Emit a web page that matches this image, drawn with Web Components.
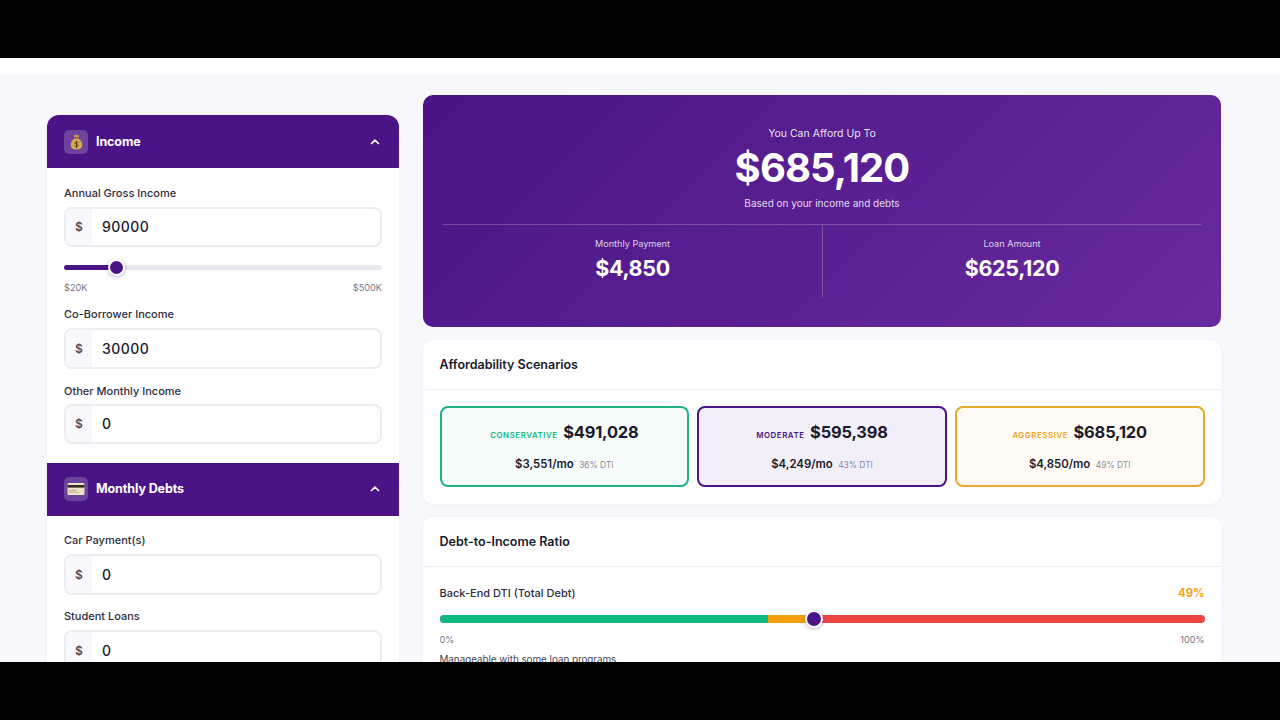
<!DOCTYPE html>
<html lang="en">
<head>
<meta charset="utf-8">
<title>Affordability Calculator</title>
<style>
html, body { margin: 0; height: 100%; background: #000; overflow: hidden; }
body { font-family: Inter, "Liberation Sans", sans-serif; color: #1a1a2e; }
</style>
</head>
<body>

<app-frame>
    <div slot="left">
        <calc-section heading="Income" icon="bag" first>
            <money-field label="Annual Gross Income" value="90000" gap="6">
                <range-slider pos="16.4" min="$20K" max="$500K"></range-slider>
            </money-field>
            <money-field label="Co-Borrower Income" value="30000" gap="6"></money-field>
            <money-field label="Other Monthly Income" value="0" gap="5"></money-field>
        </calc-section>
        <calc-section heading="Monthly Debts" icon="card">
            <money-field label="Car Payment(s)" value="0" gap="6"></money-field>
            <money-field label="Student Loans" value="0" gap="6"></money-field>
        </calc-section>
    </div>
    <div slot="right">
        <hero-card></hero-card>
        <panel-card heading="Affordability Scenarios">
            <scenario-row>
                <scenario-card tone="green" name="Conservative" price="$491,028" pay="$3,551/mo" dti="36% DTI"></scenario-card>
                <scenario-card tone="purple" name="Moderate" price="$595,398" pay="$4,249/mo" dti="43% DTI"></scenario-card>
                <scenario-card tone="amber" name="Aggressive" price="$685,120" pay="$4,850/mo" dti="49% DTI"></scenario-card>
            </scenario-row>
        </panel-card>
        <panel-card heading="Debt-to-Income Ratio" compact>
            <dti-meter></dti-meter>
        </panel-card>
    </div>
</app-frame>

<script>
// --- page frame: letterbox bars, white strip, two columns ---
class AppFrame extends HTMLElement {
    constructor() {
        super();
        this.attachShadow({mode: 'open'}).innerHTML = `
        <style>
            :host { display: flex; flex-direction: column; height: 720px; width: 1280px; background: #000; }
            .bar { height: 58px; flex: none; background: #000; }
            .view { height: 604px; flex: none; overflow: hidden; background: #f8f8fc; }
            .strip { height: 16px; background: #fff; }
            .cols { display: grid; grid-template-columns: 352px 798px; column-gap: 24px; padding: 21px 0 0 47px; align-items: start; }
            .left { padding-top: 20px; }
            ::slotted([slot=right]) { display: flex; flex-direction: column; gap: 13px; }
            ::slotted([slot=left]) { border-radius: 12px; overflow: hidden; background: #fff; box-shadow: 0 1px 4px rgba(40,20,90,.05); }
        </style>
        <div class="bar"></div>
        <div class="view">
            <div class="strip"></div>
            <div class="cols">
                <div class="left"><slot name="left"></slot></div>
                <div><slot name="right"></slot></div>
            </div>
        </div>
        <div class="bar"></div>`;
    }
}
customElements.define('app-frame', AppFrame);

// --- icons for the section heads ---
const ICONS = {
    bag: `<svg width="15" height="18" viewBox="0 0 17 19">
        <path d="M5.4 1.2 L7 2.2 L8.5 1 L10 2.2 L11.6 1.2 L10.8 4.4 H6.2 Z" fill="#cfa24e"/>
        <rect x="6" y="4.2" width="5" height="1.3" rx=".6" fill="#8a5a22"/>
        <path d="M6.2 5.5 H10.8 C13.6 7.6 15 10.2 15 12.8 C15 16.4 12.4 18 8.5 18 C4.6 18 2 16.4 2 12.8 C2 10.2 3.4 7.6 6.2 5.5 Z" fill="#d8ab52"/>
        <path d="M10.6 10.2 C10 9.3 7 9.1 6.8 10.8 C6.7 12.5 10.5 11.9 10.4 13.7 C10.2 15.3 7.2 15.1 6.5 14.1 M8.5 8.4 V16" fill="none" stroke="#5d3f16" stroke-width="1.1" stroke-linecap="round"/>
    </svg>`,
    card: `<svg width="18" height="14" viewBox="0 0 18 14">
        <rect x=".5" y="1" width="17" height="12" rx="1.5" fill="#e9e2c4"/>
        <rect x=".5" y="3" width="17" height="2.6" fill="#33291f"/>
        <rect x="2" y="8" width="7" height="1.2" fill="#b9ad84"/>
        <rect x="2" y="10" width="10" height="1" fill="#c9bf98"/>
    </svg>`
};

// --- collapsible section of the left column ---
class CalcSection extends HTMLElement {
    connectedCallback() {
        if (this.shadowRoot) return;
        this.attachShadow({mode: 'open'}).innerHTML = `
        <style>
            :host { display: block; }
            .head { height: 53px; box-sizing: border-box; background: #4a1486; display: flex; align-items: center; padding: 0 18px 0 17px; gap: 8px; color: #fff; }
            .ico { width: 24px; height: 24px; border-radius: 5px; background: rgba(255,255,255,.2); display: flex; align-items: center; justify-content: center; }
            .title { flex: 1; font: 700 12.5px/15px Inter, sans-serif; letter-spacing: -.1px; margin-top: -1px; }
            .body { padding: 16.5px 17px 18.4px; display: flex; flex-direction: column; gap: 13.5px; }
            svg.chev { display: block; }
        </style>
        <div class="head">
            <span class="ico">${ICONS[this.getAttribute('icon')] || ''}</span>
            <span class="title">${this.getAttribute('heading')}</span>
            <svg class="chev" width="12" height="12" viewBox="0 0 12 12"><path d="M2.5 7.5 L6 4.2 L9.5 7.5" fill="none" stroke="#fff" stroke-width="1.6" stroke-linecap="round" stroke-linejoin="round"/></svg>
        </div>
        <div class="body"><slot></slot></div>`;
    }
}
customElements.define('calc-section', CalcSection);

// --- label + $ input ---
class MoneyField extends HTMLElement {
    connectedCallback() {
        if (this.shadowRoot) return;
        this.attachShadow({mode: 'open'}).innerHTML = `
        <style>
            :host { display: block; }
            label { display: block; font: 500 11px/16px Inter, sans-serif; color: #2d2d3f; margin-bottom: ${this.getAttribute('gap') || 6}px; }
            .box { height: 40.6px; box-sizing: border-box; border: 2px solid #ecedf2; border-radius: 8px; display: flex; overflow: hidden; background: #fff; }
            .pre { width: 26px; background: #f8f8fc; display: flex; align-items: center; justify-content: center; font: 600 12px Inter, sans-serif; color: #4b4b5e; }
            .val { padding-left: 10px; align-self: center; font: 500 14px Inter, sans-serif; letter-spacing: .45px; color: #1a1a2e; }
        </style>
        <label>${this.getAttribute('label')}</label>
        <div class="box"><span class="pre">$</span><span class="val">${this.getAttribute('value')}</span></div>
        <slot></slot>`;
    }
}
customElements.define('money-field', MoneyField);

class RangeSlider extends HTMLElement {
    connectedCallback() {
        if (this.shadowRoot) return;
        const pos = this.getAttribute('pos');
        this.attachShadow({mode: 'open'}).innerHTML = `
        <style>
            :host { display: block; padding-top: 18.4px; }
            .track { height: 5px; border-radius: 3px; background: #e8e8f0; position: relative; }
            .fill { height: 100%; width: ${pos}%; background: #4a1486; border-radius: 3px; }
            .thumb { position: absolute; left: ${pos}%; top: 50%; width: 13px; height: 13px; margin: -8.5px 0 0 -8px; background: #4a1486; border: 2px solid #fff; border-radius: 50%; box-shadow: 0 1px 4px rgba(40,20,90,.3); }
            .ends { display: flex; justify-content: space-between; font: 400 9.2px/10px Inter, sans-serif; color: #77778a; margin-top: 12.5px; }
        </style>
        <div class="track"><div class="fill"></div><div class="thumb"></div></div>
        <div class="ends"><span>${this.getAttribute('min')}</span><span>${this.getAttribute('max')}</span></div>`;
    }
}
customElements.define('range-slider', RangeSlider);

// --- purple summary at the top of the right column ---
class HeroCard extends HTMLElement {
    constructor() {
        super();
        this.attachShadow({mode: 'open'}).innerHTML = `
        <style>
            :host { display: block; height: 232px; box-sizing: border-box; padding: 0 20px; border-radius: 10px; background: linear-gradient(135deg, #4a1486 0%, #682a9f 100%); color: #fff; text-align: center; }
            .top { height: 130px; box-sizing: border-box; padding-top: 32px; border-bottom: 1px solid rgba(255,255,255,.22); }
            .cap { font: 400 10.5px/14px Inter, sans-serif; color: rgba(255,255,255,.9); }
            .big { font: 700 40px/50px Inter, sans-serif; letter-spacing: -.9px; margin-top: 2px; }
            .sub { font: 400 10px/14px Inter, sans-serif; color: rgba(255,255,255,.85); margin-top: 3px; }
            .stats { display: grid; grid-template-columns: 1fr 1fr; height: 72px; }
            .stat { padding-top: 12px; }
            .stat + .stat { border-left: 1px solid rgba(255,255,255,.22); }
            .lbl { font: 400 9.1px/13px Inter, sans-serif; color: rgba(255,255,255,.82); }
            .num { font: 700 21.5px/28px Inter, sans-serif; letter-spacing: -.35px; margin-top: 4px; }
        </style>
        <div class="top">
            <div class="cap">You Can Afford Up To</div>
            <div class="big">$685,120</div>
            <div class="sub">Based on your income and debts</div>
        </div>
        <div class="stats">
            <div class="stat"><div class="lbl">Monthly Payment</div><div class="num">$4,850</div></div>
            <div class="stat"><div class="lbl">Loan Amount</div><div class="num">$625,120</div></div>
        </div>`;
    }
}
customElements.define('hero-card', HeroCard);

// --- white card with a titled head ---
class PanelCard extends HTMLElement {
    connectedCallback() {
        if (this.shadowRoot) return;
        this.attachShadow({mode: 'open'}).innerHTML = `
        <style>
            :host { display: block; background: #fff; border-radius: 10px; box-shadow: 0 1px 4px rgba(40,20,90,.04); overflow: hidden; }
            .head { height: 50px; box-sizing: border-box; border-bottom: 1px solid #ededf3; display: flex; align-items: center; padding: 0 16.5px; font: 600 12.5px Inter, sans-serif; color: #1a1a2e; }
            .body { padding: 16px 16.5px 17px; }
        </style>
        <div class="head">${this.getAttribute('heading')}</div>
        <div class="body"><slot></slot></div>`;
    }
}
customElements.define('panel-card', PanelCard);

class ScenarioRow extends HTMLElement {
    constructor() {
        super();
        this.attachShadow({mode: 'open'}).innerHTML = `
        <style>:host { display: grid; grid-template-columns: repeat(3, 1fr); gap: 8px; }</style>
        <slot></slot>`;
    }
}
customElements.define('scenario-row', ScenarioRow);

const TONES = {
    green: { line: '#21b285', bg: '#f5fcf9', text: '#10b981' },
    purple: { line: '#4a1486', bg: '#f2eff9', text: '#4a1486' },
    amber: { line: '#e9a92f', bg: '#fffbf4', text: '#f0a31a' }
};

class ScenarioCard extends HTMLElement {
    connectedCallback() {
        if (this.shadowRoot) return;
        const t = TONES[this.getAttribute('tone')];
        this.attachShadow({mode: 'open'}).innerHTML = `
        <style>
            :host { display: block; height: 81px; box-sizing: border-box; border: 2px solid ${t.line}; border-radius: 8px; background: ${t.bg}; text-align: center; padding-top: 13px; }
            .name { font: 600 7.9px Inter, sans-serif; text-transform: uppercase; letter-spacing: .55px; color: ${t.text}; }
            .price { font: 700 16.4px/22px Inter, sans-serif; letter-spacing: -.15px; color: #1a1a2e; margin-left: 1px; }
            .line2 { margin-top: 10px; line-height: 18px; }
            .pay { font: 600 11.4px Inter, sans-serif; color: #1a1a2e; }
            .dti { font: 400 8.4px Inter, sans-serif; color: #8b8b9b; margin-left: 1px; }
        </style>
        <div><span class="name">${this.getAttribute('name')}</span> <span class="price">${this.getAttribute('price')}</span></div>
        <div class="line2"><span class="pay">${this.getAttribute('pay')}</span> <span class="dti">${this.getAttribute('dti')}</span></div>`;
    }
}
customElements.define('scenario-card', ScenarioCard);

// --- DTI bar with three zones ---
class DtiMeter extends HTMLElement {
    constructor() {
        super();
        this.attachShadow({mode: 'open'}).innerHTML = `
        <style>
            :host { display: block; margin-top: 1px; }
            .row { display: flex; justify-content: space-between; align-items: center; height: 18px; }
            .name { font: 500 11px Inter, sans-serif; color: #2d2d3f; }
            .pct { font: 700 11.3px Inter, sans-serif; color: #f0a31a; }
            .bar { position: relative; height: 8px; margin-top: 13px; border-radius: 4px; display: flex; background: #ef4444; }
            .g { width: 43%; background: #10b981; border-radius: 4px 0 0 4px; }
            .a { width: 6%; background: #f59e0b; }
            .thumb { position: absolute; left: 49%; top: 50%; width: 14px; height: 14px; margin: -9px 0 0 -9px; border: 2px solid #fff; border-radius: 50%; background: #4a1486; box-shadow: 0 1px 4px rgba(40,20,90,.3); }
            .ends { display: flex; justify-content: space-between; margin-top: 11px; font: 400 9.2px/12px Inter, sans-serif; color: #77778a; }
            .note { margin-top: 7px; font: 400 9.8px/14px Inter, sans-serif; color: #3f3f50; }
        </style>
        <div class="row"><span class="name">Back-End DTI (Total Debt)</span><span class="pct">49%</span></div>
        <div class="bar"><div class="g"></div><div class="a"></div><div class="thumb"></div></div>
        <div class="ends"><span>0%</span><span>100%</span></div>
        <div class="note">Manageable with some loan programs.</div>`;
    }
}
customElements.define('dti-meter', DtiMeter);
</script>
</body>
</html>
